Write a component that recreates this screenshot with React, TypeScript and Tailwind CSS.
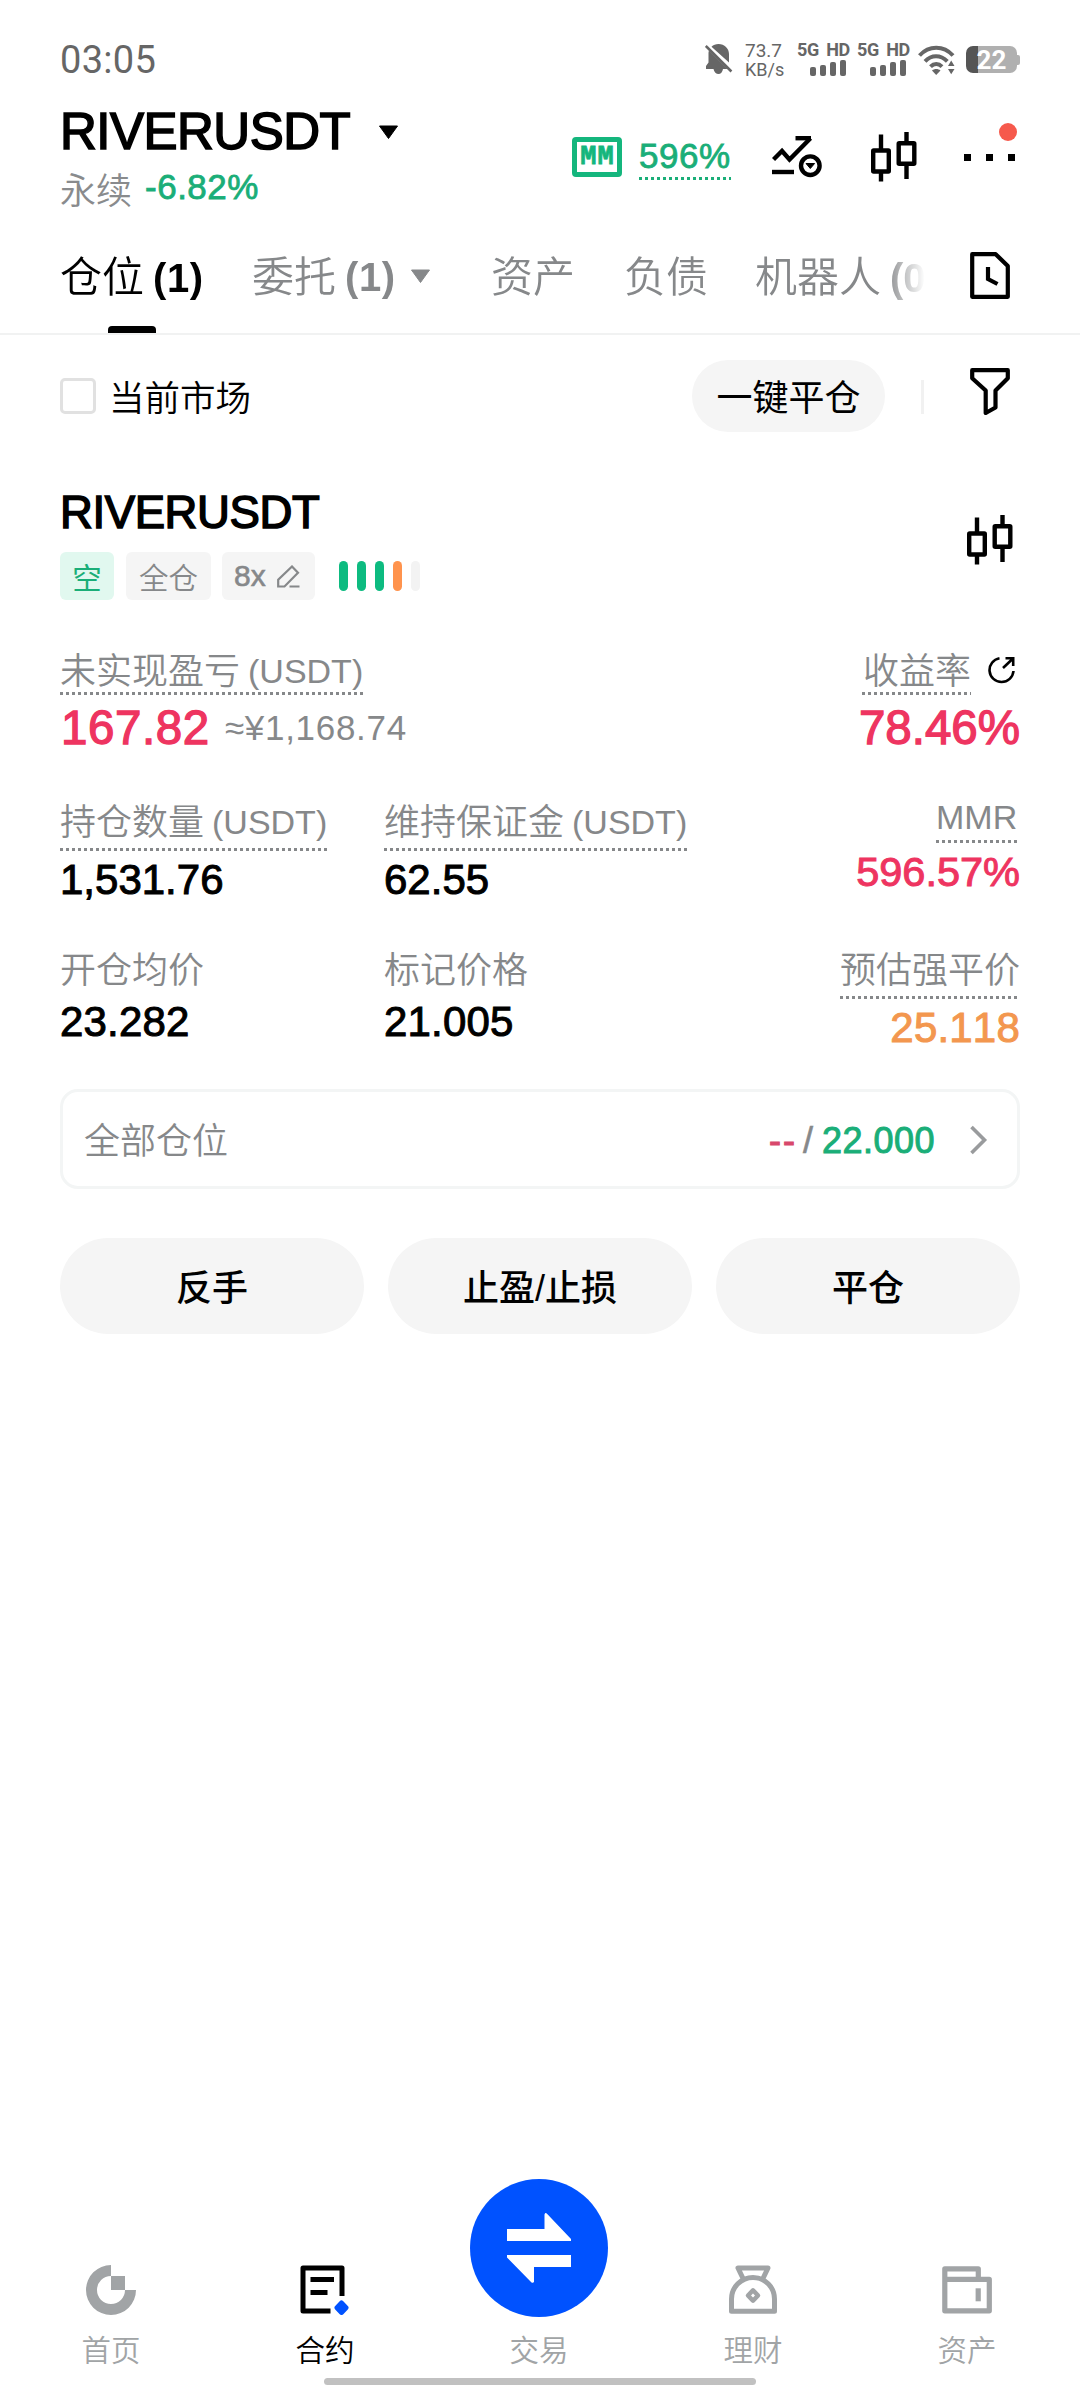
import type { ReactNode } from "react";

const sans = "font-['Liberation_Sans','Noto_Sans_CJK_SC',sans-serif]";

function Dots() {
  return (
    <div className="h-[3px] w-full bg-[repeating-linear-gradient(90deg,currentColor_0_3px,transparent_3px_6px)]" />
  );
}

function BellOff() {
  return (
    <svg width="28" height="31" viewBox="0 0 28 31" className="ml-[705px] text-[#666]" fill="currentColor">
      <path d="M13.5 0C19.500 0 24 4.500 24 10v8.500L6.500 2.800C8.300 1 10.700 0 13.500 0ZM4 6.500 22.500 25H18c-.5 3-2.300 5-4.500 5s-4.500-2-5-5H1v-3l2.500-3.500V9c0-1 .2-1.800.5-2.500Z" />
      <path d="m.8 2 25.600 25.500" stroke="currentColor" strokeWidth="2.600" />
    </svg>
  );
}

function Signal() {
  return (
    <div className="flex w-[50px] flex-col">
      <span className="-mt-[1px] text-[18px] leading-[15px] font-bold tracking-[-0.3px] whitespace-nowrap [word-spacing:3px] font-['Roboto',sans-serif]">
        5G HD
      </span>
      <div className="mt-[3px] ml-[13px] flex h-[16px] items-end gap-[4px]">
        <i className="h-[9px] w-[6px] rounded-[2px] bg-[#666]" />
        <i className="h-[11px] w-[6px] rounded-[2px] bg-[#666]" />
        <i className="h-[14px] w-[6px] rounded-[2px] bg-[#666]" />
        <i className="h-[16px] w-[6px] rounded-[2px] bg-[#666]" />
      </div>
    </div>
  );
}

function Wifi() {
  return (
    <svg width="38" height="30" viewBox="0 0 38 30" fill="none" stroke="#666" strokeWidth="4">
      <path d="M1.500 10.500C11 .2 25.500.2 35 10.500" />
      <path d="M7 16.300c6.500-6.700 15.500-6.700 22.300 0" />
      <path d="M12.500 21.700c3.500-3.500 8-3.500 11.500 0" />
      <path d="M14 25.500c2.500-2 6-2 8.500 0L18.200 30Z" fill="#666" stroke="none" />
      <path d="m30 21 3.200-5.500L36.500 21ZM30 24h6.500l-3.300 5.200Z" fill="#666" stroke="none" />
    </svg>
  );
}

function Battery() {
  return (
    <div className="flex items-center">
      <div className="flex h-[27px] w-[51px] items-center justify-center rounded-[7px] bg-[linear-gradient(90deg,#555_0_12px,#b0b0b0_12px)]">
        <span className="text-[26px] leading-none font-bold text-white font-['Roboto',sans-serif]">22</span>
      </div>
      <i className="h-[10px] w-[3px] rounded-r-[2px] bg-[#b0b0b0]" />
    </div>
  );
}

function StatusBar() {
  return (
    <div className="flex h-[100px] items-center pt-[19px] text-[#666]">
      <div className="flex w-0 items-center overflow-visible">
        <span className="ml-[60px] text-[38px] leading-none tracking-[0.300px] whitespace-nowrap font-['Roboto',sans-serif]">
          03:05
        </span>
      </div>
      <BellOff />
      <div className="ml-[12px] flex w-[40px] flex-col text-[19px] leading-[20px] font-['Roboto',sans-serif]">
        <span>73.7</span>
        <span className="text-[18px] leading-[18px]">KB/s</span>
      </div>
      <div className="ml-[12px] flex gap-[10px]">
        <Signal />
        <Signal />
      </div>
      <div className="ml-[11px]">
        <Wifi />
      </div>
      <div className="ml-[10px]">
        <Battery />
      </div>
    </div>
  );
}

function Caret({ className }: { className: string }) {
  return (
    <svg width="21" height="15" viewBox="0 0 21 15" className={className}>
      <path d="M1.500 1h18L10.500 13.500Z" fill="currentColor" stroke="currentColor" strokeLinejoin="round" />
    </svg>
  );
}

function ChartIcon() {
  return (
    <svg width="50" height="42" viewBox="0 0 50 42" fill="none" stroke="currentColor" strokeWidth="4.400">
      <path d="M1.500 23.500 10 15l7.500 8.500L38.500 2.200" />
      <path d="M23.500 2.200h15.500" strokeLinecap="butt" />
      <path d="M0 36h22" />
      <circle cx="38.300" cy="29.700" r="9.300" />
      <path d="M34 27.500h8.600l-4.300 5Z" fill="currentColor" stroke="currentColor" strokeWidth="1" />
    </svg>
  );
}

function CandlesIcon() {
  return (
    <svg width="46" height="50" viewBox="0 0 46 50" fill="none" stroke="currentColor" strokeWidth="4.400">
      <rect x="2.200" y="18.500" width="15.600" height="21" rx="0.500" strokeLinejoin="round" />
      <path d="M10 2.500v16M10 40v9.500" />
      <rect x="27.700" y="11.200" width="15.600" height="20.500" rx="0.500" strokeLinejoin="round" />
      <path d="M35.500 0v11M35.500 32v15" />
    </svg>
  );
}

function Header() {
  return (
    <header className="flex h-[130px] px-[60px]">
      <div className="w-[512px] pt-[4px]">
        <div className="flex items-center">
          <h1 className="text-[51px] leading-[56px] tracking-[-0.500px] text-black [-webkit-text-stroke:1.6px_#000]">RIVERUSDT</h1>
          <Caret className="ml-[28px] text-black" />
        </div>
        <div className="mt-[7px] flex items-start gap-[13px] leading-[40px]">
          <span className="mt-[5px] text-[36px] font-[350] text-[#898b8d]">永续</span>
          <span className="text-[35px] tracking-[0.500px] text-[#1aae78] [-webkit-text-stroke:0.8px_#1aae78]">-6.82%</span>
        </div>
      </div>
      <div className="mt-[31px] flex h-[52px] shrink-0 items-center text-black">
        <div className="flex h-[40px] w-[50px] items-center justify-center rounded-[4px] border-[5px] border-[#14b67d]">
          <span className="pl-[1px] text-[27px] leading-none font-bold tracking-[1px] text-[#14b67d] [-webkit-text-stroke:0.8px_#14b67d] font-['Liberation_Mono',monospace]">
            MM
          </span>
        </div>
        <div className="ml-[17px] w-[92px] text-[#1aae78]">
          <div className="text-[35px] leading-[42px] tracking-[0.500px] [-webkit-text-stroke:0.8px_#1aae78]">596%</div>
          <Dots />
        </div>
        <div className="ml-[41px]">
          <ChartIcon />
        </div>
        <div className="ml-[49px]">
          <CandlesIcon />
        </div>
        <div className="relative ml-[47px] flex gap-[15px]">
          <i className="size-[7px] bg-black" />
          <i className="size-[7px] bg-black" />
          <i className="size-[7px] bg-black" />
          <i className="absolute -top-[31px] left-[35px] size-[18px] rounded-full bg-[#f6594c]" />
        </div>
      </div>
    </header>
  );
}

function Tabs() {
  return (
    <nav className="flex h-[105px] border-b-2 border-[#f1f2f2] pl-[60px] text-[42px] leading-[95px] font-[350] whitespace-nowrap text-[#86888a]">
      <div className="flex w-[865px] shrink-0 overflow-hidden [mask-image:linear-gradient(90deg,#000_825px,transparent_865px)]">
        <div className="relative w-[192px] shrink-0 text-black">
          仓位<span className="ml-[9px] text-[40px] font-bold tracking-[0.600px]">(1)</span>
          <i className="absolute bottom-0 left-[48px] h-[7px] w-[48px] rounded-t-[4px] bg-black" />
        </div>
        <div className="flex w-[239px] shrink-0 items-start">
          委托<span className="ml-[9px] text-[40px] font-bold tracking-[0.600px]">(1)</span>
          <Caret className="mt-[39px] ml-[14px]" />
        </div>
        <div className="w-[133px] shrink-0">资产</div>
        <div className="w-[131px] shrink-0">负债</div>
        <div className="shrink-0">
          机器人<span className="ml-[9px] text-[40px] font-bold">(0)</span>
        </div>
      </div>
      <svg width="40" height="47" viewBox="0 0 40 47" fill="none" stroke="#000" strokeWidth="4.200" className="mt-[22px] ml-[45px] shrink-0">
        <path d="M2.200 2.200h23.500L37.800 14v30.800H2.200Z" strokeLinejoin="round" />
        <path d="M18 15v12l9.500 5" />
      </svg>
    </nav>
  );
}

function FilterRow() {
  return (
    <div className="flex h-[124px] items-center px-[60px] text-black">
      <i className="-mt-[2px] size-[36px] rounded-[5px] border-[3px] border-[#e1e1e1]" />
      <span className="mt-[4px] ml-[13px] text-[35.500px] leading-[40px] font-[350]">当前市场</span>
      <button type="button" className="-mt-[2px] ml-auto h-[72px] w-[193px] rounded-full bg-[#f5f5f5] pt-[5px] text-[36px] leading-[40px]">
        一键平仓
      </button>
      <i className="ml-[36px] h-[34px] w-[3px] bg-[#f1f1f1]" />
      <svg width="40" height="47" viewBox="0 0 40 47" fill="none" stroke="#000" strokeWidth="4.200" strokeLinejoin="round" className="-mt-[11px] mr-[10px] ml-[46px]">
        <path d="M2.200 2.200h35.600v8L25.500 22.500V39.500L15.700 45V22.500L2.200 10.200Z" />
      </svg>
    </div>
  );
}

function SymbolHeader() {
  return (
    <div className="flex justify-between pt-[29px]">
      <div>
        <h2 className="text-[45.500px] leading-[50px] tracking-[-0.400px] text-black [-webkit-text-stroke:1.5px_#000]">RIVERUSDT</h2>
        <div className="mt-[14px] flex h-[48px] items-center text-[29.500px] leading-[48px] text-[#86888a]">
          <span className="h-[48px] w-[54px] rounded-[6px] bg-[#e1f8ef] pt-[3px] text-center text-[#1aae78]">空</span>
          <span className="ml-[12px] h-[48px] w-[85px] rounded-[6px] bg-[#f5f5f5] pt-[3px] text-center font-[350]">全仓</span>
          <span className="ml-[11px] flex h-[48px] w-[93px] items-center rounded-[6px] bg-[#f5f5f5] pl-[12px] text-[30px]">
            <span className="[-webkit-text-stroke:0.6px_#86888a]">8x</span>
            <svg width="23" height="23" viewBox="0 0 23 23" fill="none" stroke="currentColor" strokeWidth="2.200" className="ml-[11px]">
              <path d="M1.200 21.500v-6.800L15 1.500l6 6.200L7.500 21.500ZM12.500 21.500H22.500" />
            </svg>
          </span>
          <div className="ml-[24px] flex gap-[9px]">
            <i className="h-[30px] w-[9px] rounded-full bg-[#0dbb80]" />
            <i className="h-[30px] w-[9px] rounded-full bg-[#0dbb80]" />
            <i className="h-[30px] w-[9px] rounded-full bg-[#0dbb80]" />
            <i className="h-[30px] w-[9px] rounded-full bg-[#ff934d]" />
            <i className="h-[30px] w-[9px] rounded-full bg-[#f3f3f3]" />
          </div>
        </div>
      </div>
      <div className="mt-[27px] mr-[7px] text-black">
        <CandlesIcon />
      </div>
    </div>
  );
}

function Label({ children, unit }: { children: ReactNode; unit?: boolean }) {
  return (
    <div className="-mb-[2px] text-[36px] leading-[40px] font-[350] whitespace-nowrap">
      {children}
      {unit && <span className="ml-[8px] align-[1px] text-[34px] leading-none font-normal">(USDT)</span>}
    </div>
  );
}

function Stats() {
  return (
    <div className="text-[#86888a] [font-kerning:none]">
      <div className="mt-[52px] flex items-start justify-between">
        <div>
          <div className="w-[303px]">
            <Label unit>未实现盈亏</Label>
            <div className="mt-[2px]"><Dots /></div>
          </div>
          <div className="mt-[8px] flex items-center leading-[50px]">
            <span className="ml-[1px] text-[47.500px] tracking-[0.600px] text-[#ee3460] [-webkit-text-stroke:1.3px_#ee3460]">167.82</span>
            <span className="ml-[15px] text-[35px] tracking-[0.700px]">≈¥1,168.74</span>
          </div>
        </div>
        <div className="flex flex-col items-end">
          <div className="flex">
            <div>
              <Label>收益率</Label>
              <div className="mt-[2px] -ml-[1px]"><Dots /></div>
            </div>
            <svg width="28" height="28" viewBox="0 0 28 28" fill="none" stroke="#000" strokeWidth="2.600" className="mt-[4px] mr-[4px] ml-[17px]">
              <path d="M11.500 2.200A12 12 0 1 0 25.500 15M15 12 25 2.500M17.500 2.200h7.700v7.800" />
            </svg>
          </div>
          <div className="mt-[8px] text-[47.500px] leading-[50px] text-[#ee3460] [-webkit-text-stroke:1.3px_#ee3460]">78.46%</div>
        </div>
      </div>

      <div className="mt-[50px] flex items-start text-[42px] leading-[46px]">
        <div className="w-[324px]">
          <div className="w-[267px]">
            <Label unit>持仓数量</Label>
            <div className="mt-[7px]"><Dots /></div>
          </div>
          <div className="mt-[6px] text-black [-webkit-text-stroke:1px_#000]">1,531.76</div>
        </div>
        <div>
          <div className="w-[303px]">
            <Label unit>维持保证金</Label>
            <div className="mt-[7px]"><Dots /></div>
          </div>
          <div className="mt-[6px] text-black [-webkit-text-stroke:1px_#000]">62.55</div>
        </div>
        <div className="ml-auto flex flex-col items-end">
          <div className="w-[84px]">
            <div className="text-[34px] leading-[28px]">MMR</div>
            <div className="mt-[9px]"><Dots /></div>
          </div>
          <div className="mt-[6px] text-[41.500px] text-[#ee3460] [-webkit-text-stroke:1px_#ee3460]">596.57%</div>
        </div>
      </div>

      <div className="mt-[48px] flex items-start text-[42px] leading-[46px]">
        <div className="w-[324px]">
          <Label>开仓均价</Label>
          <div className="mt-[10px] tracking-[0.200px] text-black [-webkit-text-stroke:1px_#000]">23.282</div>
        </div>
        <div>
          <Label>标记价格</Label>
          <div className="mt-[10px] tracking-[0.200px] text-black [-webkit-text-stroke:1px_#000]">21.005</div>
        </div>
        <div className="ml-auto flex flex-col items-end">
          <div>
            <Label>预估强平价</Label>
            <div className="mt-[7px]"><Dots /></div>
          </div>
          <div className="mt-[6px] tracking-[0.200px] text-[#f3974f] [-webkit-text-stroke:1px_#f3974f]">25.118</div>
        </div>
      </div>
    </div>
  );
}

function TpSlCard() {
  return (
    <div className="mt-[38px] flex h-[100px] items-center rounded-[18px] border-[3px] border-[#f3f5f5] pr-[29px] pl-[21px] text-[#86888a]">
      <span className="mt-[6px] text-[36px] leading-[40px] font-[350]">全部仓位</span>
      <span className="mt-[4px] ml-auto flex text-[36px] leading-[40px]">
        <span className="tracking-[2px] text-[#d8486b] [-webkit-text-stroke:1px_#d8486b]">--</span>
        <span className="ml-[6px] [-webkit-text-stroke:0.6px_#86888a]">/</span>
        <span className="ml-[9px] tracking-[0.500px] text-[#1aae78] [-webkit-text-stroke:1px_#1aae78]">22.000</span>
      </span>
      <svg width="19" height="30" viewBox="0 0 19 30" fill="none" stroke="#999b9d" strokeWidth="3.600" className="mt-[2px] ml-[34px]">
        <path d="M2.500 2 15.500 15 2.500 28" />
      </svg>
    </div>
  );
}

function Actions() {
  return (
    <div className="mt-[49px] grid grid-cols-3 gap-[24px] text-[36px] leading-[40px] font-medium text-black">
      {["反手", "止盈/止损", "平仓"].map((label) => (
        <button key={label} type="button" className="h-[96px] rounded-full bg-[#f5f5f5] pt-[5px]">
          {label}
        </button>
      ))}
    </div>
  );
}

function NavItem({ label, active, children }: { label: string; active?: boolean; children: ReactNode }) {
  return (
    <div className={`flex w-[214px] flex-col items-center ${active ? "text-black" : "text-[#a1a4a6]"}`}>
      {children}
      <span className="text-[29.500px] leading-[30px] font-[350]">{label}</span>
    </div>
  );
}

function BottomNav() {
  return (
    <footer className="mt-auto pb-[3px]">
      <div className="flex items-end justify-center pr-[2px]">
        <NavItem label="首页">
          <svg width="50" height="50" viewBox="0 0 50 50" fill="currentColor" className="mb-[21px]">
            <path d="M25 0A25 25 0 1 0 50 25H39A14 14 0 1 1 25 11ZM25 11h14v14H25Z" />
          </svg>
        </NavItem>
        <NavItem label="合约" active>
          <svg width="50" height="50" viewBox="0 0 50 50" fill="none" stroke="currentColor" strokeWidth="5" className="mb-[21px]">
            <path d="M42 31V3H3v43h27.500" strokeLinejoin="round" />
            <path d="M10.500 14.500H34M10.500 27.500h17" />
            <path d="M41.500 38 46 42.700 41.500 47.400 37 42.700Z" fill="#0052ff" stroke="#0052ff" strokeWidth="5" strokeLinejoin="round" />
          </svg>
        </NavItem>
        <NavItem label="交易">
          <div className="mb-[19px] flex size-[138px] items-center justify-center rounded-full bg-[#0052ff]">
            <svg width="64" height="70" viewBox="0 0 64 70" fill="#fff">
              <path d="M0 16h37.500V1.500q.8-2.300 2.500-.8L64 26v2H0ZM64 42H0v2.500l24.500 25q1.900 1 2.500-.8V54h37Z" />
            </svg>
          </div>
        </NavItem>
        <NavItem label="理财">
          <svg width="48" height="50" viewBox="0 0 48 50" fill="none" stroke="currentColor" strokeWidth="5" strokeLinejoin="round" className="mb-[21px]">
            <path d="M14.500 14.500 9 3h30l-5.500 11.500" />
            <path d="M2.500 46.300V34a21.500 21.500 0 0 1 43 0v12.300Z" />
            <path d="m24 25.300 5 5.200-5 5.200-5-5.200Z" strokeWidth="4.500" />
          </svg>
        </NavItem>
        <NavItem label="资产">
          <svg width="50" height="50" viewBox="0 0 50 50" fill="none" stroke="currentColor" strokeWidth="5.200" strokeLinejoin="round" className="mb-[21px]">
            <path d="M2.800 14V3.800h33.500V14M2.800 14.300h44.500v31.500H2.800Z" />
            <path d="M36.200 23.300v13" />
          </svg>
        </NavItem>
      </div>
      <div className="mx-auto mt-[12px] h-[7px] w-[432px] rounded-full bg-[#c1c1c1]" />
    </footer>
  );
}

export default function App() {
  return (
    <div lang="zh-CN" className={`flex h-[2388px] w-[1080px] flex-col overflow-hidden bg-white ${sans}`}>
      <StatusBar />
      <Header />
      <Tabs />
      <FilterRow />
      <main className="px-[60px]">
        <SymbolHeader />
        <Stats />
        <TpSlCard />
        <Actions />
      </main>
      <BottomNav />
    </div>
  );
}
